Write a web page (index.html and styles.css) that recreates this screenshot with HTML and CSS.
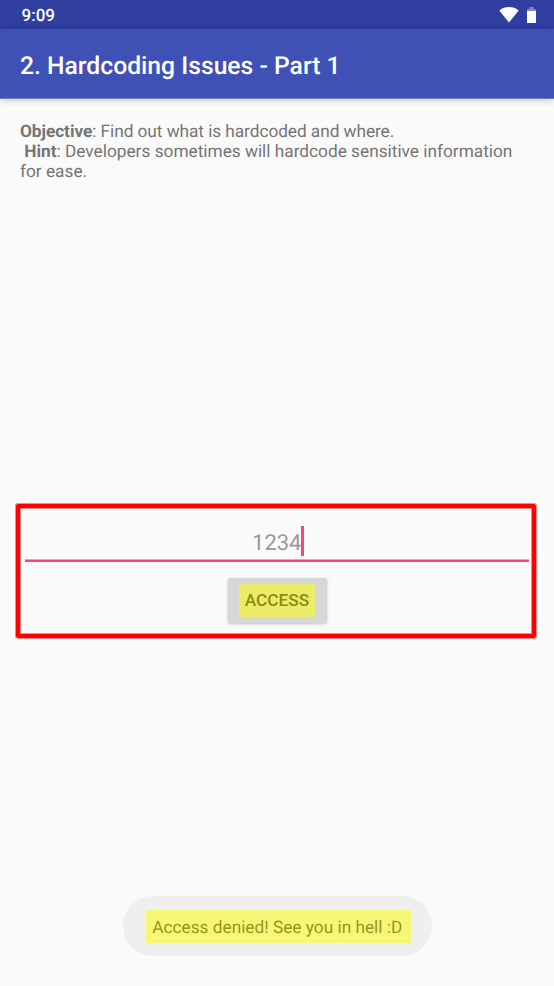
FILE: index.html
```html
<!DOCTYPE html>
<html lang="en">
<head>
<meta charset="utf-8">
<title>Hardcoding Issues</title>
<link rel="stylesheet" href="styles.css">
</head>
<body>
<div class="status">
  <span class="time">9:09</span>
  <span class="icons">
    <svg class="wifi" width="20" height="16" viewBox="0 0 20 16"><path d="M10 15.500 0.3 3.400C3 1.200 6.400 0 10 0s7 1.200 9.700 3.400z"/></svg>
    <svg class="battery" width="9" height="16" viewBox="0 0 9 16"><path class="empty" d="M2.500 0h4v2H9v2H0V2h2.500z"/><path d="M0 4h9v12H0z"/></svg>
  </span>
</div>
<header class="bar"><h1>2. Hardcoding Issues - Part 1</h1></header>
<main>
  <p class="intro"><span class="objective"><b>Objective</b>: Find out what is hardcoded and where.</span><br>&nbsp;<b>Hint</b>: Developers sometimes will hardcode sensitive information<br>for ease.</p>
  <section class="frame">
    <div class="field"><span class="value">1234</span><span class="caret"></span></div>
    <button class="access"><span>ACCESS</span></button>
  </section>
  <div class="toast"><span>Access denied! See you in hell :D</span></div>
</main>
</body>
</html>
```
FILE: styles.css
```css
* { box-sizing: border-box; }
body { margin: 0; height: 986px; display: flex; flex-direction: column; background: #fafafa; font-family: Roboto, sans-serif; overflow: hidden; text-rendering: geometricPrecision; }
.status { height: 29px; flex: none; background: #303f9f; color: #fff; display: flex; justify-content: space-between; padding: 0 18px 0 21.5px; }
.time { font-size: 17px; font-weight: 500; line-height: 33px; }
.icons { display: flex; gap: 7.5px; padding-top: 6.5px; }
.icons svg { fill: #fff; }
.icons .wifi { margin-right: 0.5px; }
.icons .empty { fill: #8089c5; }
.bar { height: 70px; flex: none; background: #3f51b5; border-bottom: 1px solid #6d7ac4; box-shadow: 0 2px 6px rgba(0,0,0,.18); padding-left: 20px; }
h1 { margin: 0; color: #fff; font-size: 24.7px; font-weight: 500; line-height: 75px; white-space: nowrap; }
main { flex: 1; display: flex; flex-direction: column; }
.intro { margin: 0; padding: 23px 0 0 20px; height: 405px; font-size: 17.25px; line-height: 20.2px; color: #757575; white-space: nowrap; }
.objective { letter-spacing: -0.055px; }
.frame { width: 520px; height: 134px; margin-left: 16px; border: 4px solid #f00; border-radius: 2px; box-shadow: 0 0 0 1px rgba(255,0,0,.45), inset 0 0 0 1px rgba(255,0,0,.45); }
.field { width: 504px; height: 54px; margin-left: 5px; border-bottom: 2px solid #ff4081; box-shadow: inset 0 -1px rgba(255,64,129,.5); display: flex; justify-content: center; padding: 18px 0 0 2px; font-size: 22px; line-height: 35px; color: #999; }
.value { margin-right: -0.5px; }
.caret { width: 3px; height: 30px; background: #ff4081; }
.access { margin: 15.5px 0 0 207.5px; width: 99px; height: 45px; border: 0; border-radius: 2px; background: #d6d7d7; box-shadow: 0 1px 3px rgba(0,0,0,.22); padding: 0; display: flex; align-items: center; justify-content: center; }
.access span { width: 76px; height: 33px; border-radius: 2px; background: #ebec68; color: #8b8c12; font: 500 17.25px/32px Roboto, sans-serif; }
.toast { margin: 258px 0 0 122.5px; width: 309px; height: 60px; border-radius: 30px; background: #efefef; display: flex; align-items: center; justify-content: center; }
.toast span { width: 265px; height: 33px; margin-left: 2px; padding-right: 1.5px; border-radius: 2px; line-height: 36px; background: #f7f777; color: #969718; font-size: 17.25px; text-align: center; white-space: nowrap; }
```
